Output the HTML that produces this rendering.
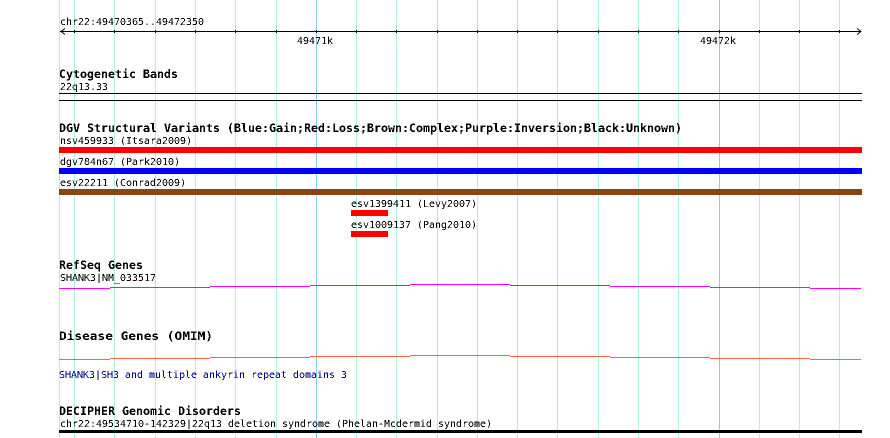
<!DOCTYPE html>
<html><head><meta charset="utf-8"><style>
html,body{margin:0;padding:0;background:#fff;width:890px;height:438px;overflow:hidden}
svg{display:block}
text{font-family:"DejaVu Sans Mono","Liberation Mono",monospace;font-size:10px;fill:#000;white-space:pre}
.b{font-weight:bold;font-size:11.5px}
</style></head><body>
<svg width="890" height="438" viewBox="0 0 890 438" xmlns="http://www.w3.org/2000/svg" shape-rendering="crispEdges">
<defs><filter id="a" filterUnits="userSpaceOnUse" x="0" y="0" width="890" height="438" color-interpolation-filters="sRGB"><feComponentTransfer><feFuncA type="discrete" tableValues="0 0 1 1"/></feComponentTransfer></filter></defs>
<rect width="890" height="438" fill="#fefffe"/>
<g fill="#afeeee">
<rect x="59" y="0" width="1" height="438"/><rect x="74" y="0" width="1" height="438"/><rect x="114" y="0" width="1" height="438"/><rect x="155" y="0" width="1" height="438"/><rect x="195" y="0" width="1" height="438"/><rect x="235" y="0" width="1" height="438"/><rect x="276" y="0" width="1" height="438"/><rect x="356" y="0" width="1" height="438"/><rect x="396" y="0" width="1" height="438"/><rect x="437" y="0" width="1" height="438"/><rect x="477" y="0" width="1" height="438"/><rect x="517" y="0" width="1" height="438"/><rect x="557" y="0" width="1" height="438"/><rect x="598" y="0" width="1" height="438"/><rect x="638" y="0" width="1" height="438"/><rect x="678" y="0" width="1" height="438"/><rect x="759" y="0" width="1" height="438"/><rect x="799" y="0" width="1" height="438"/><rect x="839" y="0" width="1" height="438"/>
</g>
<g fill="#87ceeb"><rect x="316" y="0" width="1" height="438"/><rect x="719" y="0" width="1" height="438"/></g>
<!-- axis -->
<g fill="#000">
<rect x="60" y="31" width="801" height="1"/>
<rect x="74" y="30" width="1" height="3"/><rect x="114" y="30" width="1" height="3"/><rect x="155" y="30" width="1" height="3"/><rect x="195" y="30" width="1" height="3"/><rect x="235" y="30" width="1" height="3"/><rect x="276" y="30" width="1" height="3"/><rect x="316" y="30" width="1" height="3"/><rect x="356" y="30" width="1" height="3"/><rect x="396" y="30" width="1" height="3"/><rect x="437" y="30" width="1" height="3"/><rect x="477" y="30" width="1" height="3"/><rect x="517" y="30" width="1" height="3"/><rect x="557" y="30" width="1" height="3"/><rect x="598" y="30" width="1" height="3"/><rect x="638" y="30" width="1" height="3"/><rect x="678" y="30" width="1" height="3"/><rect x="719" y="30" width="1" height="3"/><rect x="759" y="30" width="1" height="3"/><rect x="799" y="30" width="1" height="3"/><rect x="839" y="30" width="1" height="3"/>
<rect x="59" y="93" width="803" height="1"/><rect x="59" y="100" width="803" height="1"/>
<rect x="59" y="430" width="803" height="3"/>
</g>
<path d="M65 28.5L61 31.5L65 34.5M857 28.5L861 31.5L857 34.5" fill="none" stroke="#000" stroke-width="1" shape-rendering="auto"/>
<!-- bars -->
<rect x="59" y="147" width="803" height="6" fill="#f00"/>
<rect x="59" y="168" width="803" height="6" fill="#00f"/>
<rect x="59" y="189" width="803" height="6" fill="#8b4513"/>
<rect x="351" y="210" width="37" height="6" fill="#f00"/>
<rect x="351" y="231" width="37" height="6" fill="#f00"/>
<!-- gene lines -->
<g fill="#f0f">
<rect x="59" y="288" width="51" height="1"/><rect x="110" y="287" width="100" height="1"/><rect x="210" y="286" width="100" height="1"/><rect x="310" y="285" width="100" height="1"/><rect x="410" y="284" width="100" height="1"/><rect x="510" y="285" width="100" height="1"/><rect x="610" y="286" width="100" height="1"/><rect x="710" y="287" width="100" height="1"/><rect x="810" y="288" width="51" height="1"/>
</g>
<g fill="#ff6347">
<rect x="59" y="359" width="51" height="1"/><rect x="110" y="358" width="100" height="1"/><rect x="210" y="357" width="100" height="1"/><rect x="310" y="356" width="100" height="1"/><rect x="410" y="355" width="100" height="1"/><rect x="510" y="356" width="100" height="1"/><rect x="610" y="357" width="100" height="1"/><rect x="710" y="358" width="100" height="1"/><rect x="810" y="359" width="51" height="1"/>
</g>
<!-- text -->
<g filter="url(#a)">
<text x="60" y="25" textLength="144" lengthAdjust="spacingAndGlyphs">chr22:49470365..49472350</text>
<text x="297" y="44" textLength="36" lengthAdjust="spacingAndGlyphs">49471k</text>
<text x="700" y="44" textLength="36" lengthAdjust="spacingAndGlyphs">49472k</text>
<text class="b" x="59" y="78" textLength="119" lengthAdjust="spacingAndGlyphs">Cytogenetic Bands</text>
<text x="60" y="90" textLength="48" lengthAdjust="spacingAndGlyphs">22q13.33</text>
<text class="b" x="59" y="132" textLength="623" lengthAdjust="spacingAndGlyphs">DGV Structural Variants (Blue:Gain;Red:Loss;Brown:Complex;Purple:Inversion;Black:Unknown)</text>
<text x="60" y="144" textLength="132" lengthAdjust="spacingAndGlyphs">nsv459933 (Itsara2009)</text>
<text x="60" y="165" textLength="120" lengthAdjust="spacingAndGlyphs">dgv784n67 (Park2010)</text>
<text x="60" y="186" textLength="126" lengthAdjust="spacingAndGlyphs">esv22211 (Conrad2009)</text>
<text x="351" y="207" textLength="126" lengthAdjust="spacingAndGlyphs">esv1399411 (Levy2007)</text>
<text x="351" y="228" textLength="126" lengthAdjust="spacingAndGlyphs">esv1009137 (Pang2010)</text>
<text class="b" x="59" y="269" textLength="84" lengthAdjust="spacingAndGlyphs">RefSeq Genes</text>
<text x="60" y="281" textLength="96" lengthAdjust="spacingAndGlyphs">SHANK3|NM_033517</text>
<text class="b" x="59" y="340" textLength="154" lengthAdjust="spacingAndGlyphs">Disease Genes (OMIM)</text>
<text x="59" y="378" textLength="288" lengthAdjust="spacingAndGlyphs" style="fill:#00008b">SHANK3|SH3 and multiple ankyrin repeat domains 3</text>
<text class="b" x="59" y="415" textLength="182" lengthAdjust="spacingAndGlyphs">DECIPHER Genomic Disorders</text>
<text x="60" y="427" textLength="432" lengthAdjust="spacingAndGlyphs">chr22:49534710-142329|22q13 deletion syndrome (Phelan-Mcdermid syndrome)</text>
</g>
</svg>
</body></html>
